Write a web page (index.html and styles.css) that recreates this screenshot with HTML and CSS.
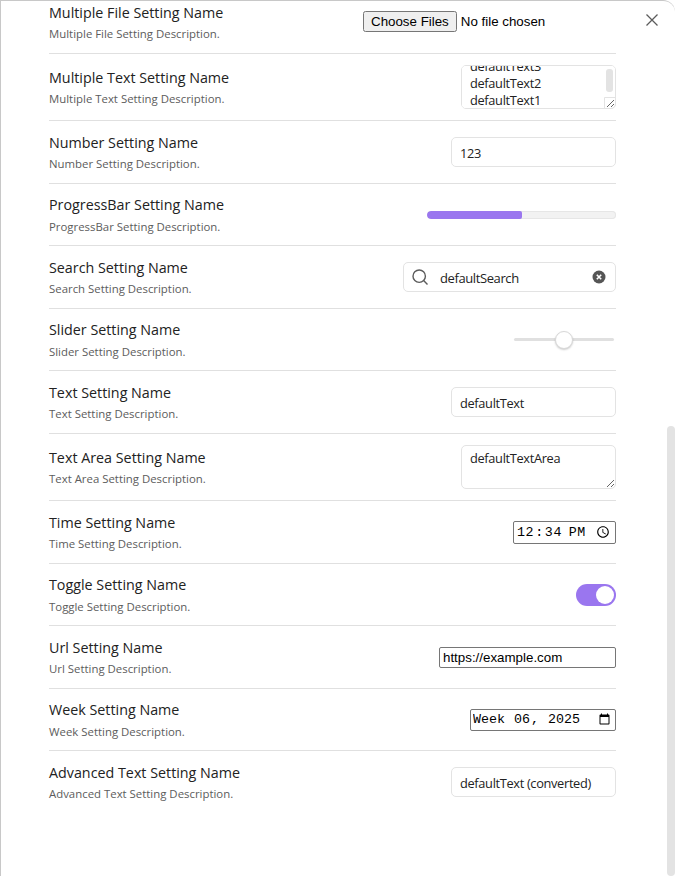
FILE: index.html
```html
<!DOCTYPE html>
<html lang="en">
<head>
    <meta charset="UTF-8">
    <meta name="viewport" content="width=device-width, initial-scale=1.0">
    <title>Settings</title>
    <link rel="stylesheet" href="styles.css">
</head>
<body>

<div class="modal">
    <button class="close-btn" aria-label="Close">
        <svg width="14" height="14" viewBox="0 0 14 14"><path d="M1.5 1.5l11 11M12.5 1.5l-11 11"/></svg>
    </button>
    <div class="scroll-thumb"></div>

    <div class="settings">
        <div class="setting first">
            <div class="info">
                <div class="name">Multiple File Setting Name</div>
                <div class="desc">Multiple File Setting Description.</div>
            </div>
            <input class="file-input" type="file" multiple>
        </div>

        <div class="setting">
            <div class="info">
                <div class="name">Multiple Text Setting Name</div>
                <div class="desc">Multiple Text Setting Description.</div>
            </div>
            <div class="multi-wrap">
                <textarea class="area multi" id="multi">defaultText5
defaultText4
defaultText3
defaultText2
defaultText1</textarea>
                <div class="multi-thumb"></div>
                <div class="multi-corner"></div>
            </div>
        </div>

        <div class="setting">
            <div class="info">
                <div class="name">Number Setting Name</div>
                <div class="desc">Number Setting Description.</div>
            </div>
            <input class="text-input" type="text" value="123">
        </div>

        <div class="setting">
            <div class="info">
                <div class="name">ProgressBar Setting Name</div>
                <div class="desc">ProgressBar Setting Description.</div>
            </div>
            <div class="progress"><div class="progress-fill"></div></div>
        </div>

        <div class="setting">
            <div class="info">
                <div class="name">Search Setting Name</div>
                <div class="desc">Search Setting Description.</div>
            </div>
            <div class="search">
                <svg class="search-icon" width="16" height="16" viewBox="0 0 16 16"><circle cx="7.2" cy="7.2" r="6.2"/><path d="M11.6 11.6l3.9 3.9"/></svg>
                <span class="search-text">defaultSearch</span>
                <svg class="search-clear" width="14" height="14" viewBox="0 0 14 14"><circle cx="7" cy="7" r="6.5"/><path d="M4.8 4.8l4.4 4.4M9.2 4.8l-4.4 4.4"/></svg>
            </div>
        </div>

        <div class="setting">
            <div class="info">
                <div class="name">Slider Setting Name</div>
                <div class="desc">Slider Setting Description.</div>
            </div>
            <input class="slider" type="range" min="0" max="100" value="50">
        </div>

        <div class="setting">
            <div class="info">
                <div class="name">Text Setting Name</div>
                <div class="desc">Text Setting Description.</div>
            </div>
            <input class="text-input" type="text" value="defaultText">
        </div>

        <div class="setting">
            <div class="info">
                <div class="name">Text Area Setting Name</div>
                <div class="desc">Text Area Setting Description.</div>
            </div>
            <textarea class="area">defaultTextArea</textarea>
        </div>

        <div class="setting">
            <div class="info">
                <div class="name">Time Setting Name</div>
                <div class="desc">Time Setting Description.</div>
            </div>
            <input class="native time" type="time" value="12:34">
        </div>

        <div class="setting">
            <div class="info">
                <div class="name">Toggle Setting Name</div>
                <div class="desc">Toggle Setting Description.</div>
            </div>
            <div class="toggle"><div class="toggle-knob"></div></div>
        </div>

        <div class="setting">
            <div class="info">
                <div class="name">Url Setting Name</div>
                <div class="desc">Url Setting Description.</div>
            </div>
            <input class="native url" type="url" value="https://example.com">
        </div>

        <div class="setting">
            <div class="info">
                <div class="name">Week Setting Name</div>
                <div class="desc">Week Setting Description.</div>
            </div>
            <input class="native week" type="week" value="2025-W06">
        </div>

        <div class="setting">
            <div class="info">
                <div class="name">Advanced Text Setting Name</div>
                <div class="desc">Advanced Text Setting Description.</div>
            </div>
            <input class="text-input" type="text" value="defaultText (converted)">
        </div>
    </div>
</div>

<script>
    const multi = document.getElementById("multi");
    multi.scrollTop = multi.scrollHeight - multi.clientHeight - 1;
</script>
</body>
</html>
```

FILE: styles.css
```css
html, body {
    margin: 0;
    height: 100%;
    overflow: hidden;
    background: #fff;
}
.modal {
    position: relative;
    height: 876px;
    box-sizing: border-box;
    overflow: hidden;
    border-top: 1px solid #c8c8c8;
    border-left: 1px solid #c8c8c8;
    border-top-right-radius: 12px;
    padding-left: 48px;
    font-family: "Open Sans", "Noto Sans", sans-serif;
    color: #222;
}
.close-btn {
    position: absolute;
    top: 12px;
    right: 16px;
    width: 14px;
    height: 14px;
    padding: 0;
    border: 0;
    background: none;
    display: flex;
}
.close-btn path {
    stroke: #5c5c5c;
    stroke-width: 1.3;
    fill: none;
}
.scroll-thumb {
    position: absolute;
    top: 425px;
    right: 0;
    bottom: 0;
    width: 8px;
    background: #e3e3e3;
    border-radius: 4px;
}
.settings {
    width: 567px;
}
.setting {
    display: flex;
    align-items: center;
    justify-content: space-between;
    padding: 11.25px 0;
    border-top: 1px solid #e0e0e0;
}
.setting.first {
    padding-top: 1.55px;
    border-top: 0;
}
.info {
    display: flex;
    flex-direction: column;
    gap: 4px;
    padding-bottom: 0.5px;
}
.name {
    font-size: 14.3px;
    line-height: 19.5px;
    color: #222;
}
.desc {
    font-size: 11.4px;
    line-height: 15px;
    color: #5c5c5c;
}
.text-input {
    width: 165px;
    height: 30px;
    box-sizing: border-box;
    padding: 2px 8px 0;
    border: 1px solid #e3e3e3;
    border-radius: 5px;
    font: 12.8px "Open Sans", sans-serif;
    letter-spacing: -0.33px;
    color: #222;
    outline: none;
}
.area {
    width: 155px;
    height: 44px;
    box-sizing: border-box;
    padding: 4px 8px 0;
    border: 1px solid #e3e3e3;
    border-radius: 5px;
    font: 12.8px/17px "Open Sans", sans-serif;
    letter-spacing: -0.33px;
    color: #222;
    outline: none;
    white-space: pre;
    overflow: auto;
}
.multi-wrap {
    position: relative;
    display: flex;
}
.multi-thumb {
    position: absolute;
    top: 4px;
    right: 3px;
    width: 7px;
    height: 23px;
    background: #e3e3e3;
    border-radius: 3px;
}
.multi-corner {
    position: absolute;
    right: 0;
    bottom: 0;
    width: 12px;
    height: 12px;
    box-sizing: border-box;
    border: 1px solid #e3e3e3;
    border-radius: 0 0 5px 0;
    pointer-events: none;
}
.file-input {
    width: 253px;
    margin-bottom: 1px;
    font: 13.33px "Liberation Sans", sans-serif;
    color: #000;
}
.progress {
    width: 189px;
    height: 8px;
    background: #f2f2f2;
    box-shadow: inset 0 0 0 1px #e6e6e6;
    border-radius: 4px;
    overflow: hidden;
}
.progress-fill {
    width: 50%;
    height: 100%;
    background: #9a76ef;
    border-radius: 4px 2px 2px 4px;
}
.search {
    width: 213px;
    height: 30px;
    box-sizing: border-box;
    display: flex;
    align-items: center;
    padding: 0 9px 0 8px;
    border: 1px solid #e3e3e3;
    border-radius: 5px;
}
.search-icon {
    margin-right: 12px;
    flex: none;
}
.search-icon circle, .search-icon path {
    fill: none;
    stroke: #5c5c5c;
    stroke-width: 1.4;
}
.search-text {
    flex: 1;
    padding-top: 1px;
    font-size: 13px;
    letter-spacing: -0.4px;
    color: #222;
}
.search-clear circle {
    fill: #555;
}
.search-clear path {
    stroke: #fff;
    stroke-width: 1.6;
}
.slider {
    -webkit-appearance: none;
    appearance: none;
    width: 100px;
    height: 3px;
    margin: 0 2px 0 0;
    background: #e0e0e0;
    border-radius: 2px;
    outline: none;
}
.slider::-webkit-slider-thumb {
    -webkit-appearance: none;
    width: 18px;
    height: 18px;
    border-radius: 50%;
    background: #fff;
    border: 1px solid #d8d8d8;
    box-shadow: 0 1px 2px rgba(0, 0, 0, 0.2);
}
.native {
    box-sizing: border-box;
    border: 1px solid #767676;
    border-radius: 2px;
    margin: 0;
    padding: 1px 2px;
    color: #000;
    outline: none;
}
.time {
    width: 103px;
    height: 23px;
    font: 13.33px "Liberation Mono", monospace;
    letter-spacing: 0.6px;
}
.url {
    width: 177px;
    height: 21px;
    padding: 1px 3px;
    font: 13.33px "Liberation Sans", sans-serif;
}
.week {
    width: 146px;
    height: 22px;
    font: 13.33px "Liberation Mono", monospace;
}
.toggle {
    width: 40px;
    height: 22px;
    box-sizing: border-box;
    padding: 2px;
    display: flex;
    justify-content: flex-end;
    background: #9a76ef;
    border-radius: 11px;
}
.toggle-knob {
    width: 18px;
    height: 18px;
    background: #fff;
    border-radius: 50%;
}
```
